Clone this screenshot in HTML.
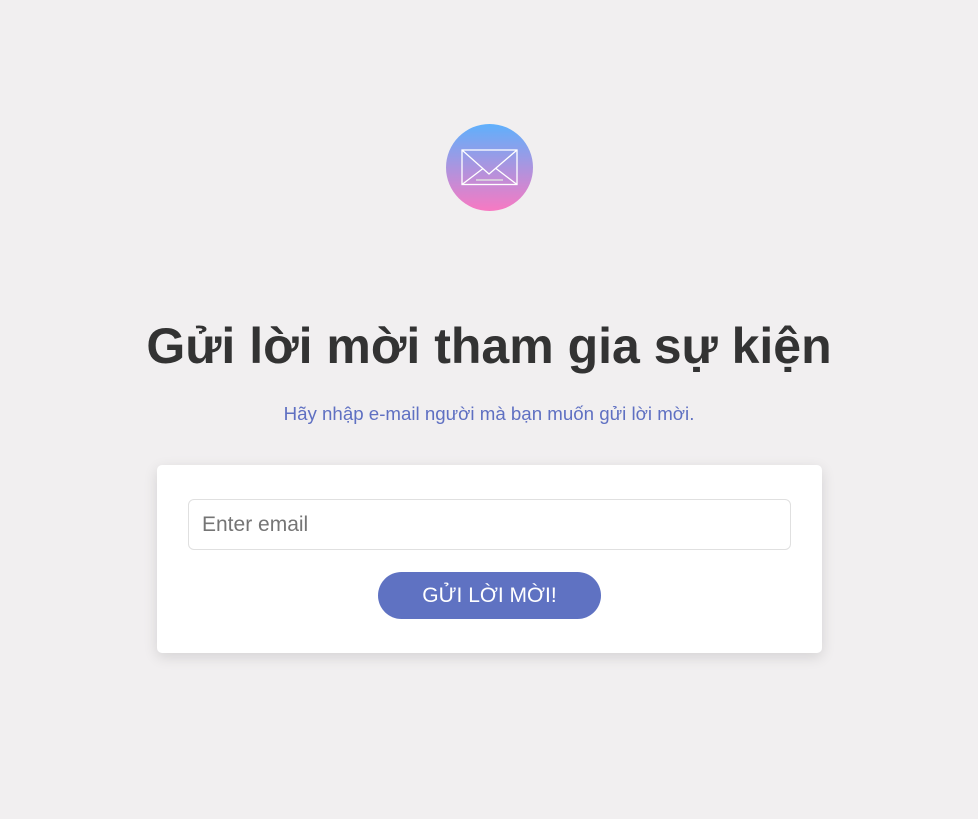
<!DOCTYPE html>
<html><head><meta charset="utf-8"><style>
body{margin:0;width:978px;height:819px;background:#f1eff0;font-family:"Liberation Sans",Arial,sans-serif;position:relative;overflow:hidden}
.ic{position:absolute;left:446px;top:124px;width:87px;height:87px;border-radius:50%;background:linear-gradient(to bottom,#5fb0fc,#f879c2)}
h1{position:absolute;top:316px;left:0;width:978px;text-align:center;margin:0;font-size:50px;font-weight:bold;color:#333;line-height:60px}
.sub{position:absolute;top:403px;left:0;width:978px;text-align:center;font-size:18.7px;color:#5f70c2}
.card{position:absolute;left:157px;top:465px;width:665px;height:188px;background:#fff;border-radius:5px;box-shadow:0 4px 14px rgba(0,0,0,0.12)}
.inp{position:absolute;left:31px;top:34px;height:51px;border:1px solid #e0e0e0;border-radius:6px;box-sizing:border-box;width:603px;font-size:21px;color:#757575;padding-left:13px;line-height:49px}
.btn{position:absolute;left:221px;top:107px;width:223px;height:47px;border-radius:24px;background:#5f72c2;color:#fff;font-size:21px;text-align:center;line-height:47px}
</style></head><body>
<div class="ic"><svg width="87" height="87" viewBox="0 0 87 87"><g fill="none" stroke="#fff" stroke-width="1.3"><rect x="16" y="26" width="55" height="34.5"/><path d="M16 26 L43 50 L71 26 M16 60.5 L37 44.5 M71 60.5 L50 44.5"/><path d="M30 56 H57" stroke="#ddd" stroke-width="1.6"/></g></svg></div>
<h1>Gửi lời mời tham gia sự kiện</h1>
<div class="sub">Hãy nhập e-mail người mà bạn muốn gửi lời mời.</div>
<div class="card"><div class="inp">Enter email</div><div class="btn">GỬI LỜI MỜI!</div></div>
</body></html>
